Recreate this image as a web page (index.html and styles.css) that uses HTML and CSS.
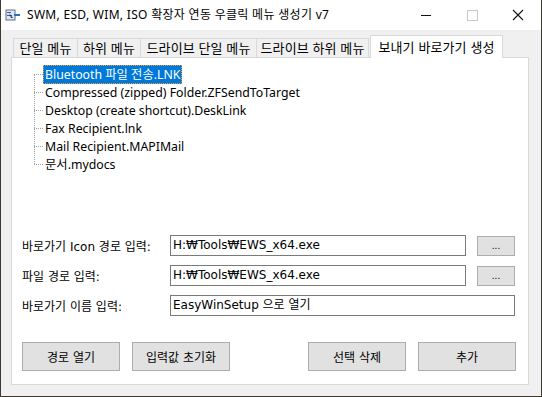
FILE: index.html
```html
<!DOCTYPE html>
<html lang="ko">
<head>
  <meta charset="UTF-8" />
  <title>SWM, ESD, WIM, ISO 확장자 연동 우클릭 메뉴 생성기 v7</title>
  <link rel="stylesheet" href="styles.css">
</head>
<body>
  <div class="window">
    <div class="titlebar">
      <svg class="app-icon" width="16" height="16" viewBox="0 0 16 16">
        <rect x="1" y="3" width="9" height="10" fill="#dfe6ee" stroke="#5b6f8a" stroke-width="1"/>
        <rect x="2" y="5" width="4" height="1" fill="#3a5f9a"/>
        <rect x="2" y="8" width="5" height="1" fill="#3a5f9a"/>
        <path d="M4 6 L8 11 L6 11 Z" fill="#2a3f66"/>
        <rect x="9" y="7" width="6" height="2" fill="#2f6fc0"/>
      </svg>
      <span class="title">SWM, ESD, WIM, ISO 확장자 연동 우클릭 메뉴 생성기 v7</span>
      <div class="controls">
        <span class="ctl min"></span>
        <span class="ctl max"></span>
        <span class="ctl close">
          <svg width="12" height="12" viewBox="0 0 12 12"><path d="M1 1 L11 11 M11 1 L1 11" stroke="#111" stroke-width="1.1"/></svg>
        </span>
      </div>
    </div>

    <div class="client">
      <div class="tabs">
        <div class="tab t1">단일 메뉴</div>
        <div class="tab t2">하위 메뉴</div>
        <div class="tab t3">드라이브 단일 메뉴</div>
        <div class="tab t4">드라이브 하위 메뉴</div>
        <div class="tab active">보내기 바로가기 생성</div>
      </div>

      <div class="panel">
        <ul class="tree">
          <li><span class="item selected">Bluetooth 파일 전송.LNK</span></li>
          <li><span class="item">Compressed (zipped) Folder.ZFSendToTarget</span></li>
          <li><span class="item">Desktop (create shortcut).DeskLink</span></li>
          <li><span class="item">Fax Recipient.lnk</span></li>
          <li><span class="item">Mail Recipient.MAPIMail</span></li>
          <li><span class="item">문서.mydocs</span></li>
        </ul>

        <div class="form">
          <label class="label">바로가기 Icon 경로 입력:</label>
          <div class="field">H:₩Tools₩EWS_x64.exe</div>
          <button class="browse">...</button>

          <label class="label">파일 경로 입력:</label>
          <div class="field">H:₩Tools₩EWS_x64.exe</div>
          <button class="browse">...</button>

          <label class="label">바로가기 이름 입력:</label>
          <div class="field wide">EasyWinSetup 으로 열기</div>
        </div>

        <div class="actions">
          <div class="group">
            <button class="btn">경로 열기</button>
            <button class="btn">입력값 초기화</button>
          </div>
          <div class="group">
            <button class="btn">선택 삭제</button>
            <button class="btn">추가</button>
          </div>
        </div>
      </div>
    </div>
  </div>
</body>
</html>
```

FILE: styles.css
```css
html, body {
  margin: 0;
  padding: 0;
}
body {
  width: 542px;
  height: 397px;
  overflow: hidden;
  font-family: "Noto Sans", "Noto Sans CJK KR", sans-serif;
  font-size: 12px;
  color: #000;
}
.window {
  box-sizing: border-box;
  width: 542px;
  height: 397px;
  border: 1px solid #3d3b2f;
  border-top: none;
  background: #f0f0f0;
  display: flex;
  flex-direction: column;
}
.titlebar {
  height: 30px;
  background: #fff;
  display: flex;
  align-items: center;
  flex-shrink: 0;
}
.app-icon {
  margin-left: 4px;
  margin-right: 6px;
}
.title {
  font-size: 12px;
  line-height: 16px;
  letter-spacing: 0.3px;
}
.controls {
  margin-left: auto;
  display: flex;
  height: 30px;
}
.ctl {
  width: 46px;
  height: 30px;
  display: flex;
  align-items: center;
  justify-content: center;
}
.ctl.min::before {
  content: "";
  width: 10px;
  height: 1px;
  background: #111;
}
.ctl.max::before {
  content: "";
  width: 9px;
  height: 9px;
  border: 1px solid #c8c8c8;
}
.client {
  flex: 1;
  padding: 5px 12px 11px 10px;
  display: flex;
  flex-direction: column;
}
.tabs {
  display: flex;
  align-items: flex-end;
  padding-left: 2px;
  height: 22px;
  font-family: "Noto Sans CJK KR", sans-serif;
  font-size: 13px;
  letter-spacing: 0.1px;
}
.tab {
  box-sizing: border-box;
  height: 19px;
  line-height: 18px;
  text-align: center;
  border: 1px solid #d9d9d9;
  border-bottom: none;
  margin-right: -1px;
  background: #f0f0f0;
  white-space: nowrap;
}
.t1 { width: 65px; }
.t2 { width: 64px; }
.t3 { width: 117px; }
.t4 { width: 113px; }
.tab.active {
  width: 133px;
  height: 23px;
  line-height: 21px;
  background: #fff;
  margin-left: 2px;
  position: relative;
  z-index: 1;
  margin-bottom: -1px;
}
.panel {
  flex: 1;
  background: #fff;
  border: 1px solid #d9d9d9;
  display: flex;
  flex-direction: column;
  padding: 0 12px 0 10px;
}
.tree {
  list-style: none;
  margin: 7px 0 0 0;
  padding: 0 0 0 12px;
  position: relative;
}
.tree::before {
  content: "";
  position: absolute;
  left: 12px;
  top: 9px;
  height: 90px;
  border-left: 1px dotted #a0a0a0;
}
.tree li {
  height: 18px;
  display: flex;
  align-items: center;
}
.tree li::before {
  content: "";
  width: 9px;
  border-top: 1px dotted #a0a0a0;
}
.item {
  height: 17px;
  line-height: 17px;
  padding: 0 1px;
  white-space: nowrap;
  border: 1px solid transparent;
  font-size: 12.3px;
}
.item.selected {
  background: #0078d7;
  color: #fff;
  border: 1px dotted #f0a030;
}
.form {
  margin-top: 62px;
  display: grid;
  grid-template-columns: 137px 296px 38px;
  column-gap: 11px;
  row-gap: 9px;
  align-items: center;
  font-family: "DejaVu Sans", "Noto Sans CJK KR", sans-serif;
  font-size: 12px;
}
.label {
  white-space: nowrap;
}
.field {
  box-sizing: border-box;
  height: 21px;
  border: 1px solid #7a7a7a;
  padding: 0 2px;
  line-height: 19px;
  white-space: nowrap;
}
.field.wide {
  grid-column: 2 / 4;
}
.browse {
  box-sizing: border-box;
  height: 20px;
  width: 38px;
  background: #e1e1e1;
  border: 1px solid #adadad;
  font-size: 10px;
  padding: 0;
  line-height: 18px;
}
.actions {
  margin-top: 26px;
  display: flex;
  justify-content: space-between;
}
.group {
  display: flex;
  gap: 12px;
}
.btn {
  box-sizing: border-box;
  width: 98px;
  height: 29px;
  background: #e1e1e1;
  border: 1px solid #adadad;
  font-family: "DejaVu Sans", "Noto Sans CJK KR", sans-serif;
  font-size: 12px;
  padding: 0;
}
```
